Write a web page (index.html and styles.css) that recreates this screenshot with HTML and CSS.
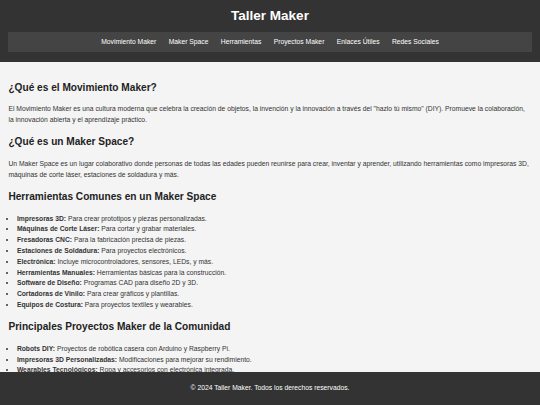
FILE: index.html
```html
<!DOCTYPE html>
<html lang="es">
<head>
<meta charset="utf-8">
<title>Taller Maker</title>
<link rel="stylesheet" href="styles.css">
</head>
<body>
<header class="site-header">
  <h1 class="site-title">Taller Maker</h1>
  <nav class="main-nav">
    <a href="#movimiento">Movimiento Maker</a>
    <a href="#space">Maker Space</a>
    <a href="#herramientas">Herramientas</a>
    <a href="#proyectos">Proyectos Maker</a>
    <a href="#enlaces">Enlaces Útiles</a>
    <a href="#redes">Redes Sociales</a>
  </nav>
</header>
<main class="content">
  <section id="movimiento">
    <h2>¿Qué es el Movimiento Maker?</h2>
    <p>El Movimiento Maker es una cultura moderna que celebra la creación de objetos, la invención y la innovación a través del "hazlo tú mismo" (DIY). Promueve la colaboración, la innovación abierta y el aprendizaje práctico.</p>
  </section>
  <section id="space">
    <h2>¿Qué es un Maker Space?</h2>
    <p>Un Maker Space es un lugar colaborativo donde personas de todas las edades pueden reunirse para crear, inventar y aprender, utilizando herramientas como impresoras 3D, máquinas de corte láser, estaciones de soldadura y más.</p>
  </section>
  <section id="herramientas">
    <h2>Herramientas Comunes en un Maker Space</h2>
    <ul>
      <li><strong>Impresoras 3D:</strong> Para crear prototipos y piezas personalizadas.</li>
      <li><strong>Máquinas de Corte Láser:</strong> Para cortar y grabar materiales.</li>
      <li><strong>Fresadoras CNC:</strong> Para la fabricación precisa de piezas.</li>
      <li><strong>Estaciones de Soldadura:</strong> Para proyectos electrónicos.</li>
      <li><strong>Electrónica:</strong> Incluye microcontroladores, sensores, LEDs, y más.</li>
      <li><strong>Herramientas Manuales:</strong> Herramientas básicas para la construcción.</li>
      <li><strong>Software de Diseño:</strong> Programas CAD para diseño 2D y 3D.</li>
      <li><strong>Cortadoras de Vinilo:</strong> Para crear gráficos y plantillas.</li>
      <li><strong>Equipos de Costura:</strong> Para proyectos textiles y wearables.</li>
    </ul>
  </section>
  <section id="proyectos">
    <h2>Principales Proyectos Maker de la Comunidad</h2>
    <ul>
      <li><strong>Robots DIY:</strong> Proyectos de robótica casera con Arduino y Raspberry Pi.</li>
      <li><strong>Impresoras 3D Personalizadas:</strong> Modificaciones para mejorar su rendimiento.</li>
      <li><strong>Wearables Tecnológicos:</strong> Ropa y accesorios con electrónica integrada.</li>
    </ul>
  </section>
</main>
<footer class="site-footer">
  <p>© 2024 Taller Maker. Todos los derechos reservados.</p>
</footer>
</body>
</html>
```
FILE: styles.css
```css
html, body {
  margin: 0;
  padding: 0;
}
body {
  font-family: "Liberation Sans", Arial, sans-serif;
  font-size: 6.75px;
  line-height: 1.6;
  background: #f4f4f4;
  color: #333;
}
.site-header {
  background: #333;
  color: #fff;
  padding: 5px 8px 10px;
  text-align: center;
}
.site-title {
  margin: 0;
  font-size: 13.5px;
  line-height: 22px;
}
.main-nav {
  margin-top: 5px;
  height: 20px;
  background: #444;
  display: flex;
  justify-content: center;
  align-items: center;
  gap: 12.4px;
}
.main-nav a {
  color: #fff;
  text-decoration: none;
}
.content {
  padding: 9.5px 8.45px 40px;
}
.content h2 {
  font-size: 10.125px;
  margin: 8.4px 0;
  line-height: 1.6;
  color: #222;
}
.content p {
  margin: 6.75px 0;
}
.content ul {
  margin: 6.75px 0;
  padding-left: 8.44px;
}
.site-footer {
  position: fixed;
  left: 0;
  right: 0;
  bottom: 0;
  height: 33px;
  background: #333;
  color: #fff;
  text-align: center;
  display: flex;
  align-items: center;
  justify-content: center;
}
.site-footer p {
  margin: 0;
}
```
